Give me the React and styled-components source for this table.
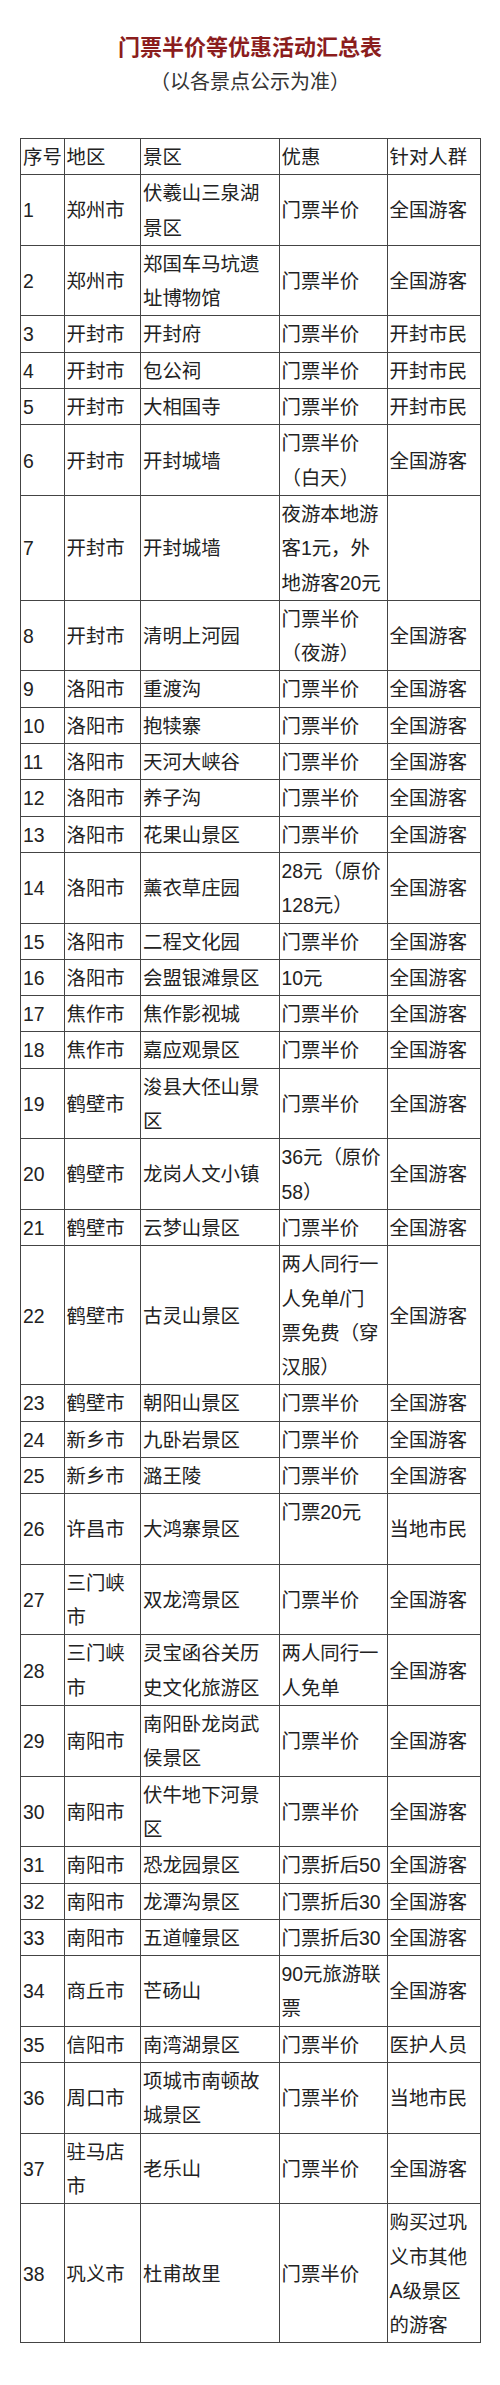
import React from "react";
import styled, { createGlobalStyle } from "styled-components";

const Global = createGlobalStyle`
  html, body { margin: 0; padding: 0; background: #fff; }
  body { font-family: "Liberation Sans", "Noto Sans CJK SC", sans-serif; color: #222; }
`;

const Page = styled.div`
  width: 500px;
  min-height: 2385px;
  padding-top: 30px;
  box-sizing: border-box;
  background: #fff;
`;

const Title = styled.h1`
  margin: 0;
  text-align: center;
  font-size: 22px;
  line-height: 35px;
  font-weight: bold;
  color: #8b1d1d;
  font-family: "Liberation Sans", "Noto Sans CJK SC", sans-serif;
`;

const Subtitle = styled.div`
  text-align: center;
  font-size: 20px;
  line-height: 35px;
  color: #333;
  font-family: "Liberation Sans", "Noto Sans CJK SC", sans-serif;
`;

const Table = styled.table`
  margin: 38px 0 0 20px;
  width: 460px;
  border-collapse: collapse;
  table-layout: fixed;
  font-size: 19.4px;
  line-height: 34.3px;
`;

const Cell = styled.td`
  border: 1px solid #444;
  padding: 1px 2px 0 2px;
  vertical-align: middle;
  white-space: pre;
  overflow: hidden;
  color: #222;
`;

const HeadCell = styled(Cell).attrs({ as: "th" })`
  font-weight: normal;
  text-align: left;
`;

const cols = [43.5, 76.5, 138.5, 108, 93.5];

const rows = [
  ["1", "郑州市", "伏羲山三泉湖\n景区", "门票半价", "全国游客"],
  ["2", "郑州市", "郑国车马坑遗\n址博物馆", "门票半价", "全国游客"],
  ["3", "开封市", "开封府", "门票半价", "开封市民"],
  ["4", "开封市", "包公祠", "门票半价", "开封市民"],
  ["5", "开封市", "大相国寺", "门票半价", "开封市民"],
  ["6", "开封市", "开封城墙", "门票半价\n（白天）", "全国游客"],
  ["7", "开封市", "开封城墙", "夜游本地游\n客1元，外\n地游客20元", ""],
  ["8", "开封市", "清明上河园", "门票半价\n（夜游）", "全国游客"],
  ["9", "洛阳市", "重渡沟", "门票半价", "全国游客"],
  ["10", "洛阳市", "抱犊寨", "门票半价", "全国游客"],
  ["11", "洛阳市", "天河大峡谷", "门票半价", "全国游客"],
  ["12", "洛阳市", "养子沟", "门票半价", "全国游客"],
  ["13", "洛阳市", "花果山景区", "门票半价", "全国游客"],
  ["14", "洛阳市", "薰衣草庄园", "28元（原价\n128元）", "全国游客"],
  ["15", "洛阳市", "二程文化园", "门票半价", "全国游客"],
  ["16", "洛阳市", "会盟银滩景区", "10元", "全国游客"],
  ["17", "焦作市", "焦作影视城", "门票半价", "全国游客"],
  ["18", "焦作市", "嘉应观景区", "门票半价", "全国游客"],
  ["19", "鹤壁市", "浚县大伾山景\n区", "门票半价", "全国游客"],
  ["20", "鹤壁市", "龙岗人文小镇", "36元（原价\n58）", "全国游客"],
  ["21", "鹤壁市", "云梦山景区", "门票半价", "全国游客"],
  ["22", "鹤壁市", "古灵山景区", "两人同行一\n人免单/门\n票免费（穿\n汉服）", "全国游客"],
  ["23", "鹤壁市", "朝阳山景区", "门票半价", "全国游客"],
  ["24", "新乡市", "九卧岩景区", "门票半价", "全国游客"],
  ["25", "新乡市", "潞王陵", "门票半价", "全国游客"],
  ["26", "许昌市", "大鸿寨景区", "门票20元\n ", "当地市民"],
  ["27", "三门峡\n市", "双龙湾景区", "门票半价", "全国游客"],
  ["28", "三门峡\n市", "灵宝函谷关历\n史文化旅游区", "两人同行一\n人免单", "全国游客"],
  ["29", "南阳市", "南阳卧龙岗武\n侯景区", "门票半价", "全国游客"],
  ["30", "南阳市", "伏牛地下河景\n区", "门票半价", "全国游客"],
  ["31", "南阳市", "恐龙园景区", "门票折后50", "全国游客"],
  ["32", "南阳市", "龙潭沟景区", "门票折后30", "全国游客"],
  ["33", "南阳市", "五道幢景区", "门票折后30", "全国游客"],
  ["34", "商丘市", "芒砀山", "90元旅游联\n票", "全国游客"],
  ["35", "信阳市", "南湾湖景区", "门票半价", "医护人员"],
  ["36", "周口市", "项城市南顿故\n城景区", "门票半价", "当地市民"],
  ["37", "驻马店\n市", "老乐山", "门票半价", "全国游客"],
  ["38", "巩义市", "杜甫故里", "门票半价", "购买过巩\n义市其他\nA级景区\n的游客"],
];

export default function App() {
  return (
    <Page>
      <Global />
      <Title>门票半价等优惠活动汇总表</Title>
      <Subtitle>（以各景点公示为准）</Subtitle>
      <Table>
        <colgroup>
          {cols.map((w, i) => (
            <col key={i} style={{ width: `${w}px` }} />
          ))}
        </colgroup>
        <thead>
          <tr>
            {["序号", "地区", "景区", "优惠", "针对人群"].map((h) => (
              <HeadCell key={h}>{h}</HeadCell>
            ))}
          </tr>
        </thead>
        <tbody>
          {rows.map((r) => (
            <tr key={r[0]}>
              {r.map((c, i) => (
                <Cell key={i}>{c}</Cell>
              ))}
            </tr>
          ))}
        </tbody>
      </Table>
    </Page>
  );
}
